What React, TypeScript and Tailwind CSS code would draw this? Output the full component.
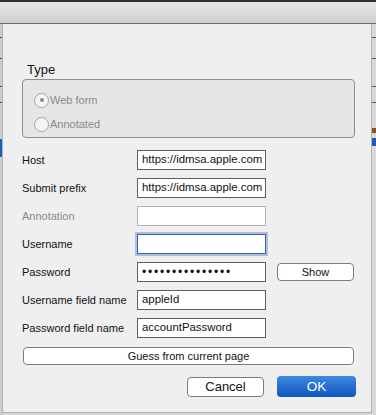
import React from 'react';

const FONT = { fontFamily: '"Liberation Sans", Arial, sans-serif' };

interface Field {
  label: string;
  value?: string;
  disabled?: boolean;
  focused?: boolean;
  password?: boolean;
}

const FIELDS: Field[] = [
  { label: 'Host', value: 'https://idmsa.apple.com' },
  { label: 'Submit prefix', value: 'https://idmsa.apple.com' },
  { label: 'Annotation', disabled: true },
  { label: 'Username', focused: true },
  { label: 'Password', password: true },
  { label: 'Username field name', value: 'appleId' },
  { label: 'Password field name', value: 'accountPassword' },
];

function Strip({ side }: { side: 'left' | 'right' }) {
  return (
    <div className={`flex flex-col ${side === 'left' ? 'w-[2px] bg-[#cdcdcd]' : 'flex-1 bg-[#d9d9d9]'}`}>
      <div className="h-[13px]" />
      <div className="h-[1px] bg-[#555]" />
      <div className="h-[20px]" />
      <div className="h-[1px] bg-[#555]" />
      <div className="h-[27px]" />
      <div className="h-[1px] bg-[#555]" />
      <div className="h-[15px]" />
      <div className="h-[1px] bg-[#555]" />
      {side === 'left' ? (
        <>
          <div className="h-[36px]" />
          <div className="h-[18px] bg-[#1a5fc4]" />
        </>
      ) : (
        <>
          <div className="h-[25px]" />
          <div className="h-[5px] bg-[#9a4a1c]" />
          <div className="h-[5px]" />
          <div className="h-[8px] bg-[#1a5fc4]" />
        </>
      )}
    </div>
  );
}

function Radio({ label, checked }: { label: string; checked?: boolean }) {
  return (
    <div className="flex items-center h-[16px]">
      <div className="w-[15px] h-[15px] rounded-full border border-[#a3a3a3] bg-[#f4f4f4] flex items-center justify-center">
        {checked && <div className="w-[4px] h-[4px] rounded-full bg-[#8a8a8a]" />}
      </div>
      <span className="ml-[1px] text-[11px] text-[#8a8a8a] leading-none">{label}</span>
    </div>
  );
}

function Input({ field }: { field: Field }) {
  let cls = 'border-[#5e5e5e] bg-white';
  if (field.disabled) cls = 'border-[#b4b4b4] bg-white';
  if (field.focused) cls = 'border-[#3f669c] bg-white shadow-[0_0_0_2px_#a9c0e0]';
  return (
    <div className={`w-[129px] h-[20px] border ${cls} flex items-center px-[4px] overflow-hidden`}>
      {field.password ? (
        <span className="text-[12px] tracking-[1.8px] text-[#111] leading-none">{'•'.repeat(15)}</span>
      ) : (
        <span className="text-[11.4px] text-[#111] whitespace-nowrap leading-none">{field.value}</span>
      )}
    </div>
  );
}

export default function App() {
  return (
    <div className="w-[376px] h-[415px] flex flex-col bg-[#d6d6d6] overflow-hidden" style={FONT}>
      <div className="h-[2px] bg-[#352c29]" />
      <div className="h-[22px] bg-gradient-to-b from-[#e6e6e6] to-[#d0d0d0] border-b border-[#6c6c6c]" />
      <div className="flex flex-1">
        <Strip side="left" />
        <div className="w-[370px] h-[389px] bg-[#efefef] border-l border-r border-b border-[#b0b0b0] pl-[19px] pt-[38px] flex flex-col">
          <div className="text-[13px] leading-[15px] text-[#111] pl-[5px]">Type</div>
          <div className="mt-[2px] w-[333px] h-[59px] border border-[#8e8e8e] rounded-[4px] bg-[#e6e6e6] pl-[11px] pt-[12px] flex flex-col gap-[8px]">
            <Radio label="Web form" checked />
            <Radio label="Annotated" />
          </div>
          <div className="mt-[12px] flex flex-col gap-[8px]">
            {FIELDS.map(f => (
              <div key={f.label} className="flex items-center h-[20px]">
                <div className={`w-[115px] text-[11px] ${f.disabled ? 'text-[#8a8a8a]' : 'text-[#111]'}`}>{f.label}</div>
                <Input field={f} />
                {f.password && (
                  <button className="ml-[11px] w-[77px] h-[18px] rounded-[4px] border border-[#7c7c7c] bg-white text-[11px] text-[#111] leading-none">
                    Show
                  </button>
                )}
              </div>
            ))}
          </div>
          <button className="mt-[9px] ml-[1px] w-[331px] h-[18px] rounded-[4px] border border-[#7c7c7c] bg-white text-[11px] text-[#111] leading-none">
            Guess from current page
          </button>
          <div className="mt-[11px] flex justify-end w-[334px] gap-[13px] items-center">
            <button className="w-[77px] h-[20px] rounded-[4px] border border-[#7c7c7c] bg-white text-[13px] text-[#111] leading-none">
              Cancel
            </button>
            <button className="w-[79px] h-[21px] rounded-[4px] bg-gradient-to-b from-[#3d8ae3] to-[#0b56bb] text-[13.5px] text-white leading-none">
              OK
            </button>
          </div>
        </div>
        <Strip side="right" />
      </div>
    </div>
  );
}
